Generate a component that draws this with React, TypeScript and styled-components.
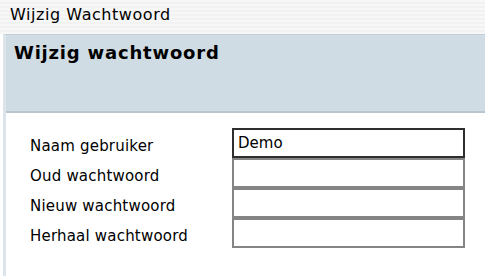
import React from "react";
import styled, { createGlobalStyle } from "styled-components";

const Global = createGlobalStyle`
  html, body { margin: 0; padding: 0; background: #ffffff; }
  body { font-family: "DejaVu Sans", Verdana, sans-serif; color: #000; overflow: hidden; }
`;

const Page = styled.div`
  width: 485px;
  height: 276px;
  display: flex;
  flex-direction: column;
  overflow: hidden;
`;

const TopBar = styled.div`
  height: 34px;
  flex: none;
  box-sizing: border-box;
  padding: 5px 0 0 10px;
  font-size: 16px;
  letter-spacing: 0.55px;
  line-height: 20px;
  background: repeating-linear-gradient(#f7f7f7 0 2px, #f2f2f2 2px 4px);
`;

const Panel = styled.section`
  flex: 1;
  margin-left: 3px;
  margin-right: -20px;
  border-left: 3px solid #dde4ea;
  border-top: 1px solid #c3d0d9;
  display: flex;
  flex-direction: column;
`;

const PanelHeader = styled.header`
  height: 78px;
  flex: none;
  box-sizing: border-box;
  background: #cfdce4;
  border-bottom: 2px solid #b7c6d0;
  padding: 6px 0 0 8px;
`;

const Title = styled.h2`
  margin: 0;
  font-size: 18px;
  letter-spacing: 0.8px;
  font-weight: bold;
  line-height: 24px;
`;

const Body = styled.div`
  background: #fff;
  padding: 15px 0 0 24px;
`;

const Form = styled.div`
  display: grid;
  grid-template-columns: 202px 233px;
`;

const Label = styled.label`
  font-size: 15px;
  letter-spacing: 0.2px;
  height: 30px;
  display: flex;
  align-items: center;
  padding-top: 6px;
  box-sizing: border-box;
`;

const Field = styled.div<{ $active?: boolean }>`
  height: 30px;
  box-sizing: border-box;
  border: 2px solid ${(p) => (p.$active ? "#2e2e2e" : "#858585")};
  background: #fff;
  font-size: 15px;
  display: flex;
  align-items: center;
  padding-left: 4px;
`;

const rows = [
  { label: "Naam gebruiker", value: "Demo", active: true },
  { label: "Oud wachtwoord", value: "" },
  { label: "Nieuw wachtwoord", value: "" },
  { label: "Herhaal wachtwoord", value: "" },
];

export default function App() {
  return (
    <Page>
      <Global />
      <TopBar>Wijzig Wachtwoord</TopBar>
      <Panel>
        <PanelHeader>
          <Title>Wijzig wachtwoord</Title>
        </PanelHeader>
        <Body>
          <Form>
            {rows.map((r) => (
              <React.Fragment key={r.label}>
                <Label>{r.label}</Label>
                <Field $active={r.active}>{r.value}</Field>
              </React.Fragment>
            ))}
          </Form>
        </Body>
      </Panel>
    </Page>
  );
}
